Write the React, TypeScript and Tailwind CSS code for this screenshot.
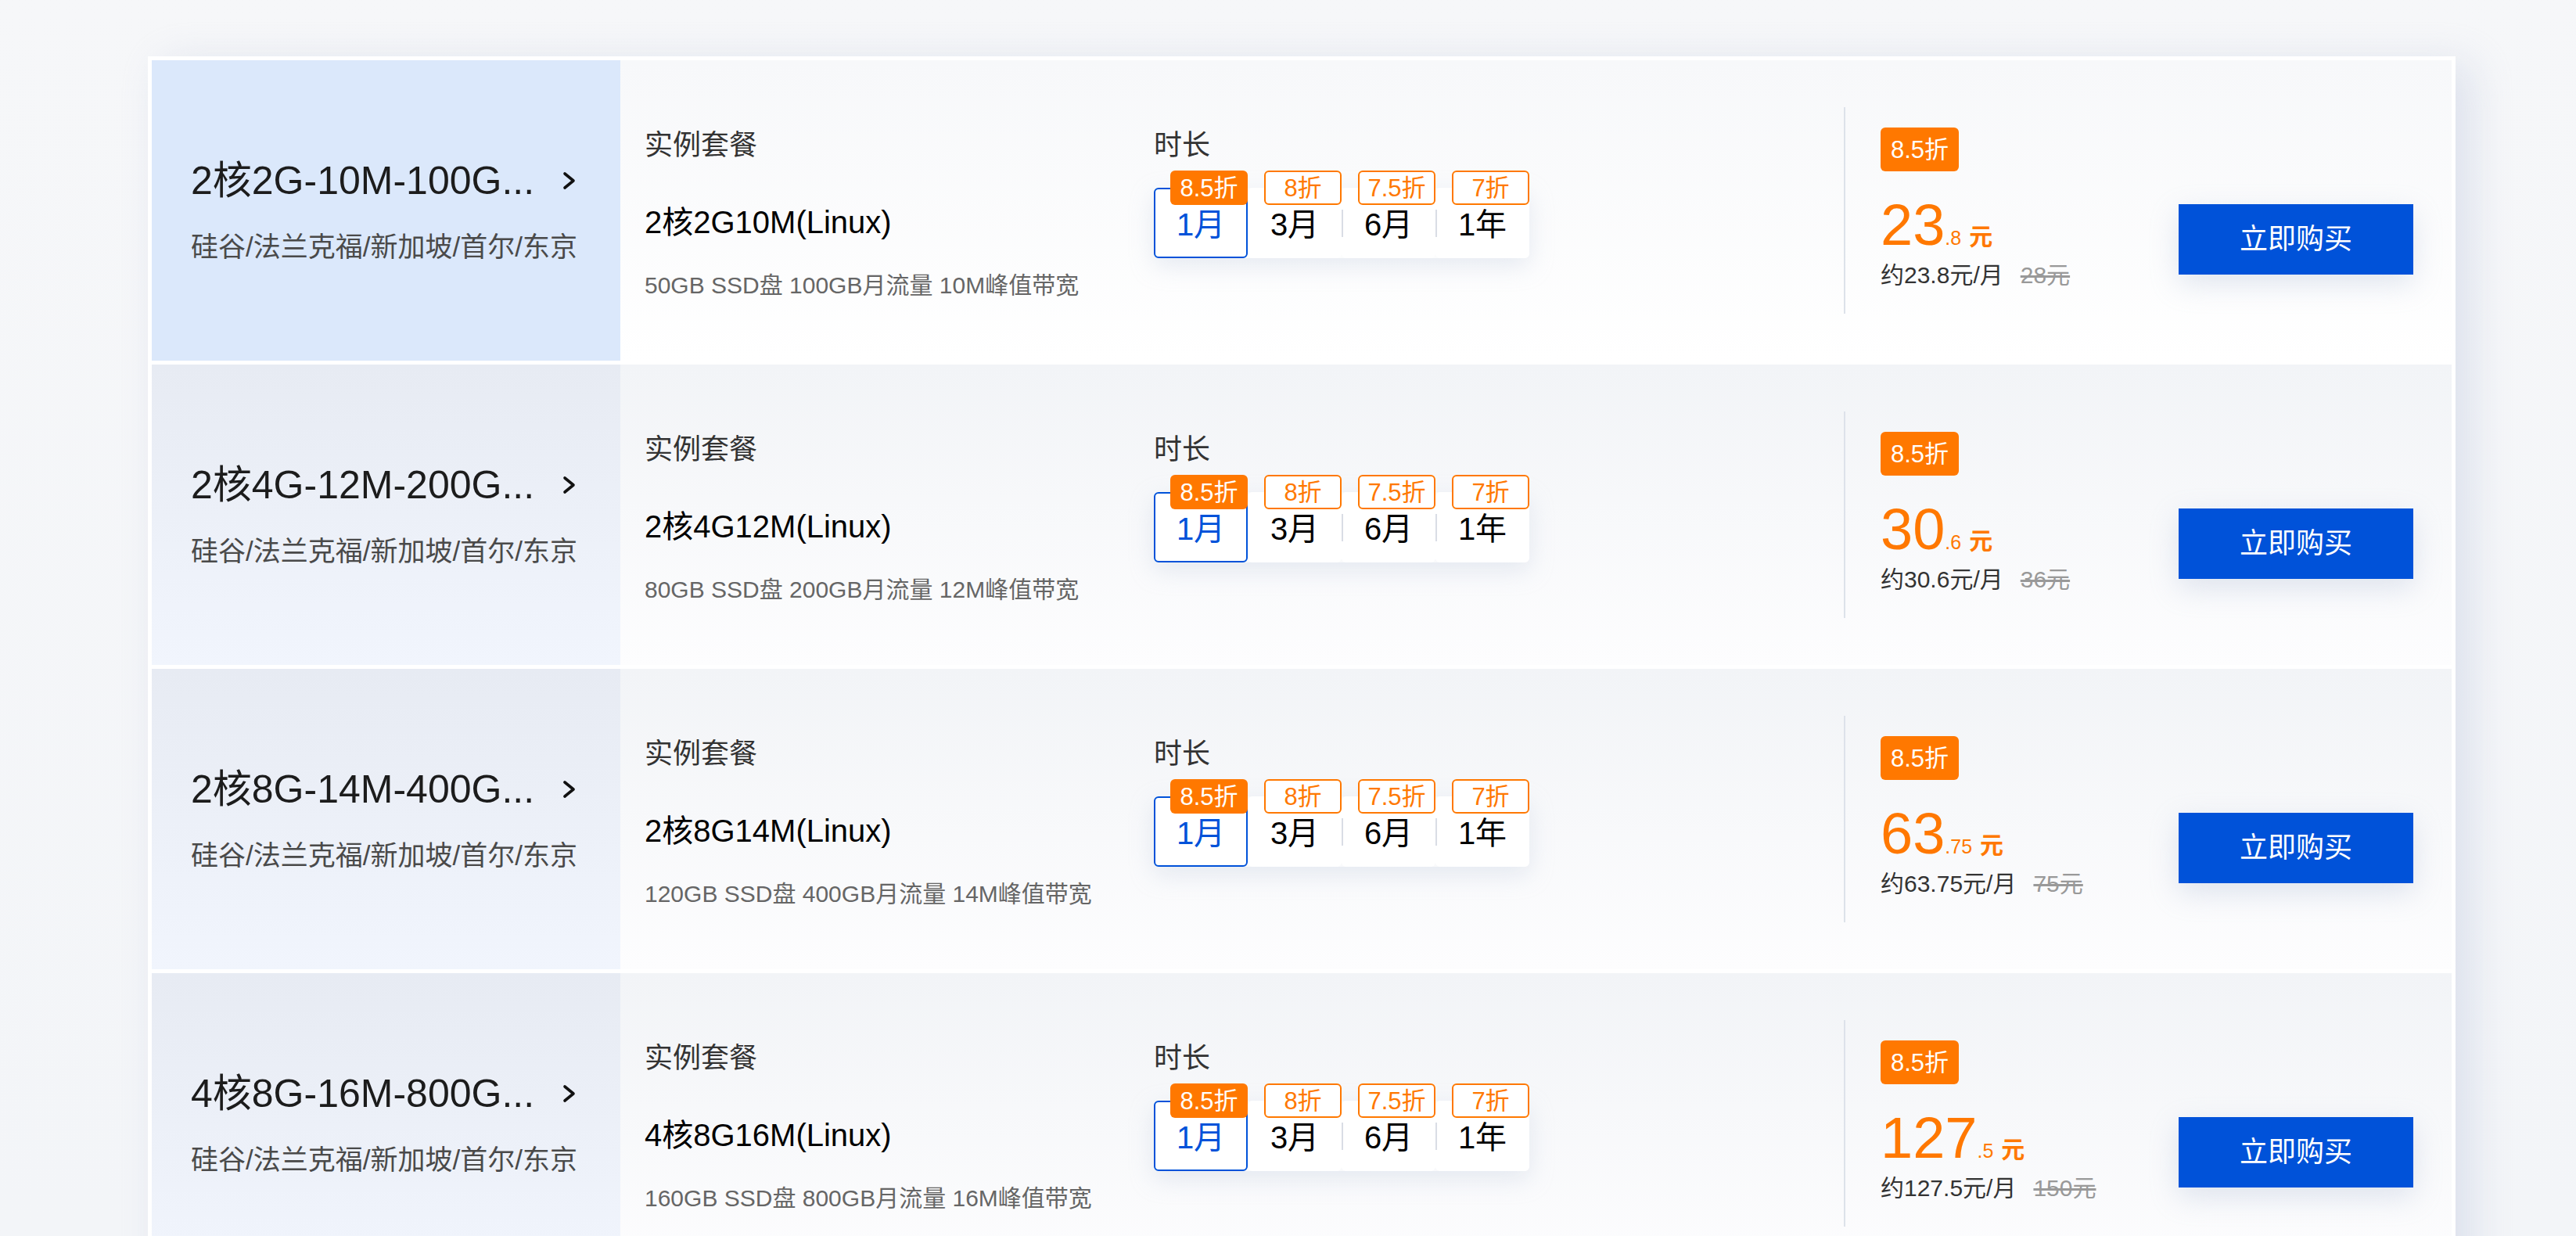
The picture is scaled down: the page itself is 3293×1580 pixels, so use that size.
import React from "react";

interface Plan {
  title: string;
  name: string;
  spec: string;
  int: string;
  dec: string;
  monthly: string;
  original: string;
}

const plans: Plan[] = [
  {
    title: "2核2G-10M-100G...",
    name: "2核2G10M(Linux)",
    spec: "50GB SSD盘 100GB月流量 10M峰值带宽",
    int: "23",
    dec: ".8",
    monthly: "约23.8元/月",
    original: "28元",
  },
  {
    title: "2核4G-12M-200G...",
    name: "2核4G12M(Linux)",
    spec: "80GB SSD盘 200GB月流量 12M峰值带宽",
    int: "30",
    dec: ".6",
    monthly: "约30.6元/月",
    original: "36元",
  },
  {
    title: "2核8G-14M-400G...",
    name: "2核8G14M(Linux)",
    spec: "120GB SSD盘 400GB月流量 14M峰值带宽",
    int: "63",
    dec: ".75",
    monthly: "约63.75元/月",
    original: "75元",
  },
  {
    title: "4核8G-16M-800G...",
    name: "4核8G16M(Linux)",
    spec: "160GB SSD盘 800GB月流量 16M峰值带宽",
    int: "127",
    dec: ".5",
    monthly: "约127.5元/月",
    original: "150元",
  },
];

const durations = [
  { label: "1月", discount: "8.5折" },
  { label: "3月", discount: "8折" },
  { label: "6月", discount: "7.5折" },
  { label: "1年", discount: "7折" },
];

const Chevron = () => (
  <svg width="17" height="24" viewBox="0 0 17 24" fill="none" className="ml-[36px] shrink-0">
    <polyline points="3,3 14,12 3,21" stroke="#111" strokeWidth="3.6" strokeLinecap="round" strokeLinejoin="round" />
  </svg>
);

const DurationPicker = ({ selected }: { selected: number }) => (
  <div className="mt-[34px] flex rounded-[6px] shadow-[0_10px_30px_rgba(190,200,222,0.35)]">
    {durations.map((d, i) => {
      const active = i === selected;
      return (
        <div
          key={d.label}
          className={
            active
              ? "relative flex h-[90px] w-[120px] items-center justify-center rounded-[6px] border-2 border-[#0052d9] bg-white pt-[4px] text-[40px] leading-none text-[#0052d9]"
              : "relative flex h-[90px] w-[120px] items-center justify-center rounded-[6px] bg-white pt-[4px] text-[40px] leading-none text-black"
          }
        >
          {i > 0 && i - 1 !== selected && (
            <span className="absolute left-0 top-[28px] h-[35px] w-[2px] bg-[#d9dde5]" />
          )}
          {d.label}
          <span
            className={
              active
                ? "absolute right-[-2px] top-[-24px] flex h-[44px] w-[99px] items-center justify-center rounded-[6px] bg-[#ff7800] text-[31px] leading-none text-white"
                : "absolute right-0 top-[-22px] flex h-[44px] w-[99px] items-center justify-center rounded-[6px] border-2 border-[#ff7800] bg-white text-[31px] leading-none text-[#ff7800]"
            }
          >
            {d.discount}
          </span>
        </div>
      );
    })}
  </div>
);

const PlanRow = ({ plan, active }: { plan: Plan; active: boolean }) => (
  <div
    className={
      active
        ? "flex h-[384px] shrink-0 bg-linear-to-b from-[#f7f8fa] to-white"
        : "flex h-[384px] shrink-0 bg-linear-to-b from-[#f2f4f7] to-[#fdfdfe]"
    }
  >
    {/* region list */}
    <div
      className={
        active
          ? "flex w-[599px] shrink-0 items-center bg-[#dbe8fb] pl-[50px]"
          : "flex w-[599px] shrink-0 items-center bg-linear-to-b from-[#e7ebf3] to-[#f1f5fd] pl-[50px]"
      }
    >
      <div>
        <div className="flex items-center">
          <span className="text-[50px] leading-[58px] text-[#1c1c1c]">{plan.title}</span>
          <Chevron />
        </div>
        <div className="mt-[34px] text-[35px] leading-[43px] text-[#4a4a4a]">硅谷/法兰克福/新加坡/首尔/东京</div>
      </div>
    </div>

    {/* spec + duration */}
    <div className="flex flex-1 pl-[31px]">
      <div className="w-[651px] shrink-0 pt-[89px]">
        <div className="text-[36px] leading-[40px] text-[#333]">实例套餐</div>
        <div className="mt-[54px] text-[40px] leading-[48px] text-black">{plan.name}</div>
        <div className="mt-[39px] text-[30px] leading-[36px] text-[#666]">{plan.spec}</div>
      </div>
      <div className="pt-[89px]">
        <div className="text-[36px] leading-[40px] text-[#333]">时长</div>
        <DurationPicker selected={0} />
      </div>
    </div>

    {/* price + buy */}
    <div className="my-[60px] flex w-[777px] shrink-0 items-start border-l-2 border-[#dde2ea] pl-[45px]">
      <div className="w-[381px] shrink-0 pt-[26px]">
        <div className="flex h-[56px] w-[100px] items-center justify-center rounded-[6px] bg-[#ff7800] text-[31px] leading-none text-white">
          8.5折
        </div>
        <div className="mt-[32px] h-[72px] text-[74px] leading-[72px] text-[#ff7800]">
          <span className="leading-none">{plan.int}</span>
          <span className="text-[25px] leading-none">{plan.dec}</span>
          <span className="ml-[10px] text-[30px] font-bold leading-none">元</span>
        </div>
        <div className="mt-[11px] text-[30px] leading-[36px] text-[#333]">
          {plan.monthly}
          <span className="ml-[22px] text-[#999] line-through">{plan.original}</span>
        </div>
      </div>
      <button className="mt-[124px] flex h-[90px] w-[300px] shrink-0 items-center justify-center bg-[#0052d9] text-[36px] text-white shadow-[0_12px_36px_rgba(160,175,205,0.3)]">
        立即购买
      </button>
    </div>
  </div>
);

export default function App() {
  return (
    <div className="h-[1580px] overflow-hidden bg-linear-to-b from-[#f6f7f9] to-[#f3f5f8] pt-[72px] font-['Liberation_Sans','Noto_Sans_CJK_SC',sans-serif]">
      <div className="ml-[189px] flex w-[2950px] flex-col gap-[5px] bg-white p-[5px] shadow-[20px_10px_50px_rgba(190,200,222,0.45)]">
        {plans.map((p, i) => (
          <PlanRow key={p.name} plan={p} active={i === 0} />
        ))}
      </div>
    </div>
  );
}
